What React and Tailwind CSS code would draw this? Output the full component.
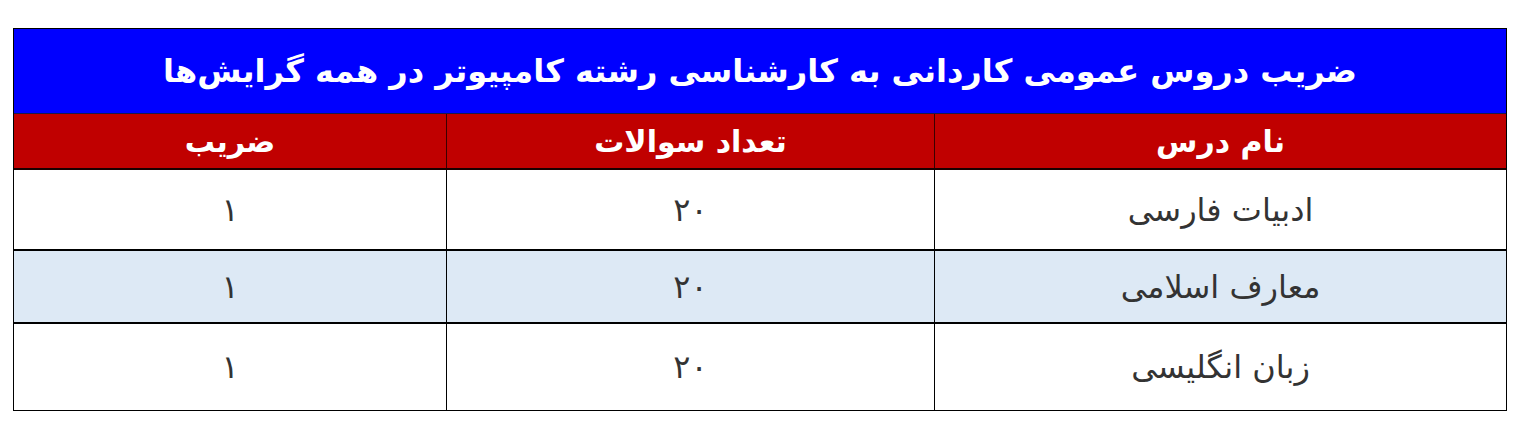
const rows = [
  { name: "ادبیات فارسی", count: "۲۰", coef: "۱", h: "h-[81px]", bg: "bg-white" },
  { name: "معارف اسلامی", count: "۲۰", coef: "۱", h: "h-[73px]", bg: "bg-[#dde9f5]" },
  { name: "زبان انگلیسی", count: "۲۰", coef: "۱", h: "h-[86px]", bg: "bg-white" },
];

const font = { fontFamily: '"DejaVu Sans", "Noto Sans", sans-serif' };

export default function App() {
  return (
    <div className="w-[1524px] h-[437px] bg-white pt-[28px] pl-[13px]" style={font}>
      <div dir="rtl" className="w-[1494px] border border-black">
        {/* title */}
        <div className="h-[85px] bg-[#0000ff] flex items-center justify-center border-b border-[#1a1a4a]">
          <h1 className="text-white font-bold text-[32px] leading-none tracking-[-0.9px]">
            ضریب دروس عمومی کاردانی به کارشناسی رشته کامپیوتر در همه گرایش‌ها
          </h1>
        </div>

        {/* header */}
        <div className="grid grid-cols-[572px_488px_1fr] h-[56px] bg-[#c00000] text-white font-bold text-[30px] border-b-2 border-[#1a0000]">
          <div className="flex items-center justify-center border-l border-[#3a0000]">نام درس</div>
          <div className="flex items-center justify-center border-l border-[#3a0000]">تعداد سوالات</div>
          <div className="flex items-center justify-center">ضریب</div>
        </div>

        {rows.map((r, i) => (
          <div
            key={i}
            className={
              "grid grid-cols-[572px_488px_1fr] text-[32px] text-[#333] " +
              r.bg + " " + r.h + " " +
              (i < rows.length - 1 ? "border-b-2 border-black" : "")
            }
          >
            <div className="flex items-center justify-center border-l border-black">{r.name}</div>
            <div className="flex items-center justify-center border-l border-black">{r.count}</div>
            <div className="flex items-center justify-center">{r.coef}</div>
          </div>
        ))}
      </div>
    </div>
  );
}
